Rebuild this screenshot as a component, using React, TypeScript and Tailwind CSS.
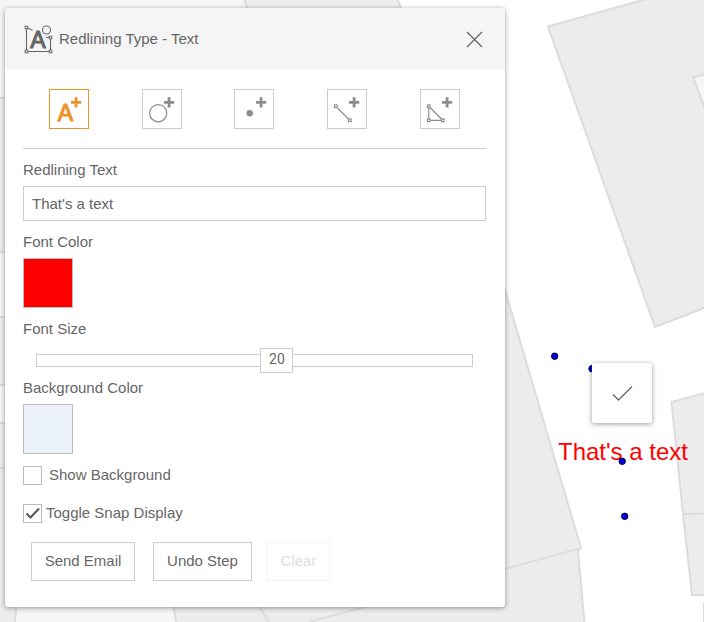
import { useState } from "react";
import type { ReactNode } from "react";

type Tool = "text" | "circle" | "point" | "line" | "polygon";

const MIN_SIZE = 10;
const MAX_SIZE = 28;

const tools: { id: Tool; label: string; icon: ReactNode }[] = [
  {
    id: "text",
    label: "Text",
    icon: (
      <text
        x="16.5"
        y="32"
        textAnchor="middle"
        fontSize="23"
        fill="currentColor"
        strokeWidth="1.1"
      >
        A
      </text>
    ),
  },
  {
    id: "circle",
    label: "Circle",
    icon: <circle cx="16.2" cy="24.2" r="8.6" />,
  },
  {
    id: "point",
    label: "Point",
    icon: <circle cx="15.7" cy="24.2" r="3.2" fill="currentColor" stroke="none" />,
  },
  {
    id: "line",
    label: "Line",
    icon: (
      <>
        <path d="M10.5 19 21.5 30" />
        <rect x="7.5" y="16" width="2.6" height="2.6" />
        <rect x="21.5" y="30" width="2.6" height="2.6" />
      </>
    ),
  },
  {
    id: "polygon",
    label: "Polygon",
    icon: (
      <>
        <path d="M8.8 19V30M10.5 31.300H21.500M10.500 19 21.500 30" />
        <rect x="7.5" y="16" width="2.6" height="2.6" />
        <rect x="7.5" y="30" width="2.6" height="2.6" />
        <rect x="21.5" y="30" width="2.6" height="2.6" />
      </>
    ),
  },
];

const snapPoints = [
  [554.7, 356.2],
  [592, 368.7],
  [622.2, 461.3],
  [624.7, 516.3],
];

function RedliningIcon() {
  return (
    <svg width="30" height="30" viewBox="0 0 30 30" fill="none" stroke="#666" aria-hidden="true">
      <path d="M3.5 5V26M5 27.500H26M27.500 26V15M5 4 9.500 6.300M23 13.500H26" strokeWidth="1.1" />
      <rect x="2.2" y="2.2" width="2.6" height="2.6" />
      <rect x="2.2" y="26.2" width="2.6" height="2.6" />
      <rect x="26.2" y="26.2" width="2.6" height="2.6" />
      <rect x="26.2" y="12.2" width="2.6" height="2.6" />
      <circle cx="23.5" cy="6" r="4" strokeWidth="1.1" />
      <text
        x="15"
        y="24"
        textAnchor="middle"
        fontSize="23"
        fill="#666"
        strokeWidth="1.1"
      >
        A
      </text>
    </svg>
  );
}

function MapCanvas({ text }: { text: string }) {
  return (
    <svg className="absolute inset-0 h-full w-full" aria-hidden="true">
      <g stroke="#dcdcdc" strokeWidth="2" fill="#ececec">
        <path d="M-5 -5H396L505 290 581 548 578 551 586 640H-5Z" />
        <path d="M-5 -5H243L260 50V94L-5 98Z" fill="#f6f6f6" />
        <path d="M-5 253 20 251V317H-5Z" fill="#f6f6f6" />
        <path d="M-5 385H20V423H-5Z" fill="#f6f6f6" />
        <path d="M-5 468H20M578 549 309 622M254 597 270 625" fill="none" />
        <path d="M18 590 14 630H178L170 590Z" fill="#f6f6f6" />
        <path d="M655 327 548 26.500 650 -2H720V302Z" />
        <path d="M720 72 693 77 720 150Z" fill="#f6f6f6" />
        <path d="M720 389 671.500 402 683 514 692 595H720Z" />
        <path d="M683 514 720 513M704 602V630" fill="none" />
      </g>
      <text x="623" y="460" textAnchor="middle" fontSize="24" fill="#ff0000">
        {text}
      </text>
      {snapPoints.map(([x, y]) => (
        <circle key={`${x}-${y}`} cx={x} cy={y} r="3.2" fill="#0000e6" stroke="#000022" />
      ))}
    </svg>
  );
}

export default function App() {
  const [tool, setTool] = useState<Tool>("text");
  const [text, setText] = useState("That's a text");
  const [fontSize, setFontSize] = useState(20);
  const [showBackground, setShowBackground] = useState(false);
  const [snapDisplay, setSnapDisplay] = useState(true);

  const ratio = (fontSize - MIN_SIZE) / (MAX_SIZE - MIN_SIZE);

  return (
    <main className="relative min-h-screen overflow-hidden bg-white px-[5px] py-2 font-['Liberation_Sans',Arial,sans-serif] text-[15px] leading-5 text-[#666]">
      <MapCanvas text={text} />

      <section className="relative w-full max-w-[500px] overflow-hidden rounded-[3px] bg-white shadow-[0_1px_5px_rgba(0,0,0,0.4)]">
        <header className="flex h-[62px] items-center justify-between bg-[#f5f5f5] pr-[22px] pl-[18px]">
          <div className="flex items-center gap-[6px]">
            <RedliningIcon />
            <h1>Redlining Type - Text</h1>
          </div>
          <button type="button" aria-label="Close">
            <svg width="17" height="17" viewBox="0 0 17 17" stroke="#666" strokeWidth="1.3">
              <path d="M1 1 16 16M16 1 1 16" />
            </svg>
          </button>
        </header>

        <div className="pr-[19px] pb-[26px] pl-[18px]">
          <div className="flex justify-around border-b border-[#ccc] py-[19px]">
            {tools.map((item) => (
              <button
                key={item.id}
                type="button"
                aria-label={item.label}
                aria-pressed={tool === item.id}
                onClick={() => setTool(item.id)}
                className={
                  tool === item.id
                    ? "size-10 border border-[#ee9328] text-[#ee9328]"
                    : "size-10 border border-[#ccc] text-[#8c8c8c]"
                }
              >
                <svg
                  width="38"
                  height="38"
                  viewBox="1 1 38 38"
                  fill="none"
                  stroke="currentColor"
                  strokeWidth="1.2"
                >
                  {item.icon}
                  <path d="M22 13.300H32.200M27.100 8.200V18.400" strokeWidth="2.8" />
                </svg>
              </button>
            ))}
          </div>

          <label htmlFor="redlining-text" className="mt-[11px] block">
            Redlining Text
          </label>
          <input
            id="redlining-text"
            type="text"
            value={text}
            onChange={(e) => setText(e.target.value)}
            className="mt-[6px] block h-[35px] w-full border border-[#ccc] bg-white px-2 outline-none"
          />

          <p className="mt-[11px]">Font Color</p>
          <button
            type="button"
            aria-label="Font Color"
            className="mt-[6px] block size-[50px] border border-[#bbb] bg-[#ff0000]"
          />

          <label htmlFor="font-size" className="mt-[11px] block">
            Font Size
          </label>
          <div className="relative mx-[13px] mt-[9px] flex h-[25px] items-center">
            <input
              id="font-size"
              type="range"
              min={MIN_SIZE}
              max={MAX_SIZE}
              value={fontSize}
              onChange={(e) => setFontSize(Number(e.target.value))}
              className="h-[13px] w-full appearance-none border border-[#ccc] bg-white outline-none [&::-webkit-slider-thumb]:h-[25px] [&::-webkit-slider-thumb]:w-[33px] [&::-webkit-slider-thumb]:appearance-none [&::-webkit-slider-thumb]:border [&::-webkit-slider-thumb]:border-[#ccc] [&::-webkit-slider-thumb]:bg-white"
            />
            <output
              htmlFor="font-size"
              className="pointer-events-none absolute top-0 w-[33px] text-center font-[Roboto,sans-serif] text-[14px] leading-[23px]"
              style={{ left: `calc((100% - 33px) * ${ratio})` }}
            >
              {fontSize}
            </output>
          </div>

          <p className="mt-[5px]">Background Color</p>
          <button
            type="button"
            aria-label="Background Color"
            className="mt-[6px] block size-[50px] border border-[#bbb] bg-[#eaf1fa]"
          />

          <div className="mt-[11px] flex flex-col items-start gap-[18px]">
            <label className="flex items-center gap-[7px]">
              <Checkbox checked={showBackground} onChange={setShowBackground} />
              Show Background
            </label>
            <label className="flex items-center gap-1">
              <Checkbox checked={snapDisplay} onChange={setSnapDisplay} />
              Toggle Snap Display
            </label>
          </div>

          <div className="mt-[19px] ml-2 flex">
            <button type="button" className="h-[39px] w-[104px] border border-[#ccc] pb-[2px]">
              Send Email
            </button>
            <button
              type="button"
              className="ml-[18px] h-[39px] w-[99px] border border-[#ccc] pb-[2px]"
            >
              Undo Step
            </button>
            <button
              type="button"
              disabled
              className="ml-[15px] h-[39px] w-[63px] border border-[#f2f2f2] pb-[2px] text-[#e0e0e0]"
            >
              Clear
            </button>
          </div>
        </div>
      </section>

      <button
        type="button"
        aria-label="Confirm"
        className="absolute top-[363px] left-[592px] flex size-[60px] items-center justify-center rounded-[2px] bg-white shadow-[0_1px_5px_rgba(0,0,0,0.4)]"
      >
        <svg width="22" height="16" viewBox="0 0 22 16" fill="none" stroke="#666" strokeWidth="1.3">
          <path d="M2 9.500 7.500 15 21 1.500" />
        </svg>
      </button>
    </main>
  );
}

function Checkbox({
  checked,
  onChange,
}: {
  checked: boolean;
  onChange: (value: boolean) => void;
}) {
  return (
    <span className="grid size-[19px]">
      <input
        type="checkbox"
        checked={checked}
        onChange={(e) => onChange(e.target.checked)}
        className="col-start-1 row-start-1 size-[19px] appearance-none border border-[#bbb] bg-white"
      />
      {checked && (
        <svg
          className="pointer-events-none col-start-1 row-start-1"
          width="19"
          height="19"
          viewBox="0 0 19 19"
          fill="none"
          stroke="#555"
          strokeWidth="2"
        >
          <path d="M3.500 9.500 7.500 13.500 16 4.500" />
        </svg>
      )}
    </span>
  );
}
